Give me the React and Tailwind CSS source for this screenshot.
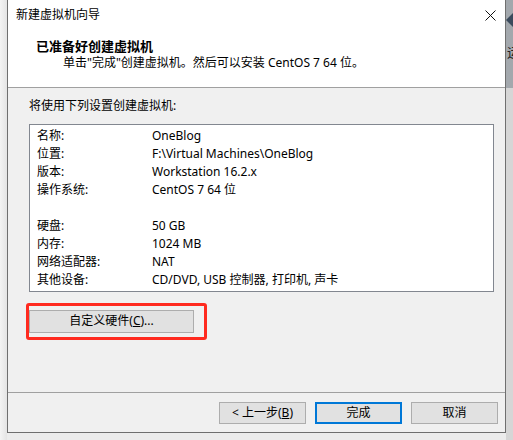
import React from 'react';

const font = { fontFamily: '"Segoe UI", "Noto Sans", "Noto Sans CJK SC", sans-serif' };

const rows = [
    ['名称:', 'OneBlog'],
    ['位置:', 'F:\\Virtual Machines\\OneBlog'],
    ['版本:', 'Workstation 16.2.x'],
    ['操作系统:', 'CentOS 7 64 位'],
    null,
    ['硬盘:', '50 GB'],
    ['内存:', '1024 MB'],
    ['网络适配器:', 'NAT'],
    ['其他设备:', 'CD/DVD, USB 控制器, 打印机, 声卡'],
];

const Button = ({ children, primary }) => (
    <button
        className={
            primary
                ? 'w-[87px] h-[22px] border-2 border-[#0078d7] bg-[#e1e1e1] text-[12px] leading-none text-black'
                : 'w-[87px] h-[22px] border border-[#adadad] bg-[#e1e1e1] text-[12px] leading-none text-black'
        }
    >
        {children}
    </button>
);

const App = () => {
    return (
        <div className="w-[513px] h-[440px] flex bg-[#ececec] overflow-hidden text-black" style={font}>
            {/* left shadow strip */}
            <div className="w-[7px] shrink-0 h-full bg-gradient-to-r from-[#f4f4f4] to-[#e4e4e4]" />

            {/* dialog window */}
            <div className="w-[499px] shrink-0 h-[433px] flex flex-col border-x border-b border-[#6f6f6f] bg-[#f0f0f0]">
                {/* title + header */}
                <div className="h-[88px] bg-white border-b border-[#a0a0a0] flex flex-col">
                    <div className="h-[30px] flex items-center justify-between pl-[8px] pr-[9px]">
                        <span className="text-[12px]">新建虚拟机向导</span>
                        <svg width="11" height="11" viewBox="0 0 11 11">
                            <path d="M0.5 0.5 L10.5 10.5 M10.5 0.5 L0.5 10.5" stroke="#111" strokeWidth="1" fill="none" />
                        </svg>
                    </div>
                    <div className="pl-[28px] pt-[7px] text-[13px] font-bold leading-[18px]">已准备好创建虚拟机</div>
                    <div className="pl-[55px] text-[12px] leading-[16px]">
                        单击"完成"创建虚拟机。然后可以安装 CentOS 7 64 位。
                    </div>
                </div>

                {/* body */}
                <div className="flex-1 flex flex-col px-[21px]">
                    <div className="mt-[10px] text-[12px] leading-[16px]">将使用下列设置创建虚拟机:</div>
                    <div className="mt-[10px] w-[465px] h-[168px] bg-white border border-[#828790] pt-[2px] pl-[7px]">
                        {rows.map((r, i) =>
                            r ? (
                                <div key={i} className="flex h-[18px] items-center text-[12px]">
                                    <span className="w-[115px] shrink-0">{r[0]}</span>
                                    <span>{r[1]}</span>
                                </div>
                            ) : (
                                <div key={i} className="h-[18px]" />
                            )
                        )}
                    </div>
                    <div className="mt-[11px] ml-[-3px] w-[181px] h-[37px] border-[3px] border-[#ff2a1f] rounded-[3px] pt-[1px]">
                        <button className="w-[165px] h-[23px] border border-[#adadad] bg-[#e1e1e1] text-[12px] leading-none">
                            自定义硬件(<span className="underline">C</span>)...
                        </button>
                    </div>
                </div>

                {/* footer */}
                <div className="h-[40px] border-t border-[#a0a0a0] flex items-start justify-end gap-[9px] pt-[9px] pr-[7px]">
                    <Button>
                        &lt; 上一步(<span className="underline">B</span>)
                    </Button>
                    <Button primary>完成</Button>
                    <Button>取消</Button>
                </div>
            </div>

            {/* right background strip */}
            <div className="flex-1 min-w-0 h-full flex flex-col bg-[#d6d6d6] overflow-hidden">
                <div className="h-[88px] bg-[#a3a8ad] overflow-hidden">
                    <svg width="8" height="16" viewBox="0 0 8 16" className="mt-[12px] block">
                        <path d="M8 0 L0 8 L8 16 Z" fill="#3b4a5c" />
                    </svg>
                    <span className="block mt-[18px] ml-[1px] text-[13px] leading-none text-[#222] whitespace-nowrap">运</span>
                </div>
            </div>
        </div>
    );
};

export default App;
